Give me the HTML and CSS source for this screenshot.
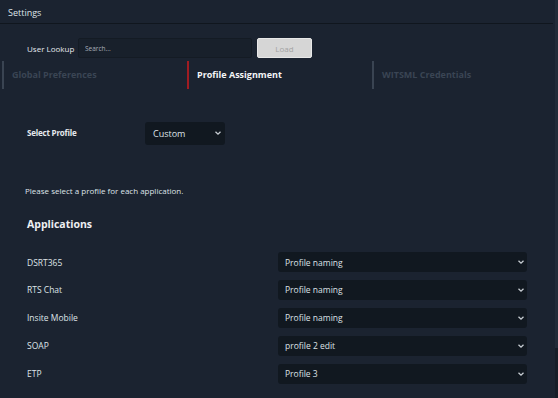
FILE: index.html
```html
<!DOCTYPE html>
<html lang="en">
<head>
    <meta charset="UTF-8">
    <meta name="viewport" content="width=device-width, initial-scale=1.0">
    <title>Settings</title>
    <link rel="stylesheet" href="styles.css">
</head>
<body>
    <div class="page">
        <div class="container">
            <div class="header">Settings</div>

            <div class="lookup">
                <label for="lookup">User Lookup</label>
                <input type="text" id="lookup" placeholder="Search...">
                <button class="btn-load">Load</button>
            </div>

            <div class="tabs">
                <div class="tab">Global Preferences</div>
                <div class="tab active">Profile Assignment</div>
                <div class="tab">WITSML Credentials</div>
            </div>

            <div class="profile-row">
                <label>Select Profile</label>
                <div class="select small">
                    <span>Custom</span>
                    <svg viewBox="0 0 8 8"><path d="M1.5 2.8 L4 5.2 L6.5 2.8" /></svg>
                </div>
            </div>

            <p class="note">Please select a profile for each application.</p>

            <h2 class="apps-title">Applications</h2>

            <div class="apps">
                <div class="app-row">
                    <span class="app-name">DSRT365</span>
                    <div class="select wide"><span>Profile naming</span><svg viewBox="0 0 8 8"><path d="M1.5 2.8 L4 5.2 L6.5 2.8" /></svg></div>
                </div>
                <div class="app-row">
                    <span class="app-name">RTS Chat</span>
                    <div class="select wide"><span>Profile naming</span><svg viewBox="0 0 8 8"><path d="M1.5 2.8 L4 5.2 L6.5 2.8" /></svg></div>
                </div>
                <div class="app-row">
                    <span class="app-name">Insite Mobile</span>
                    <div class="select wide"><span>Profile naming</span><svg viewBox="0 0 8 8"><path d="M1.5 2.8 L4 5.2 L6.5 2.8" /></svg></div>
                </div>
                <div class="app-row">
                    <span class="app-name">SOAP</span>
                    <div class="select wide"><span>profile 2 edit</span><svg viewBox="0 0 8 8"><path d="M1.5 2.8 L4 5.2 L6.5 2.8" /></svg></div>
                </div>
                <div class="app-row">
                    <span class="app-name">ETP</span>
                    <div class="select wide"><span>Profile 3</span><svg viewBox="0 0 8 8"><path d="M1.5 2.8 L4 5.2 L6.5 2.8" /></svg></div>
                </div>
            </div>
        </div>
        <div class="scrollbar"><div class="thumb"></div></div>
    </div>
</body>
</html>
```

FILE: styles.css
```css
body {
    font-family: "Open Sans", "Liberation Sans", sans-serif;
    margin: 0;
    padding: 0;
    background-color: #1b2330;
    color: #e6e9ed;
    overflow: hidden;
}
.page {
    display: flex;
    width: 558px;
    height: 398px;
}
.container {
    width: 555px;
}
.header {
    height: 23px;
    width: 545px;
    padding-left: 8px;
    font-size: 9px;
    line-height: 25px;
    border-bottom: 1px solid #10161e;
    color: #dfe3e8;
}
.lookup {
    display: flex;
    align-items: center;
    margin-top: 14px;
    padding-left: 27px;
    height: 20px;
}
.lookup label {
    font-size: 8px;
    width: 51px;
}
.lookup input {
    width: 174px;
    height: 20px;
    box-sizing: border-box;
    background-color: #18202b;
    border: 1px solid #141b24;
    border-radius: 2px;
    padding: 0 6px;
    font-family: inherit;
    font-size: 6.5px;
    color: #c0c6ce;
}
.lookup input::placeholder {
    color: #a7afb9;
}
.btn-load {
    margin-left: 5px;
    width: 55px;
    height: 20px;
    background-color: #d6d6d6;
    border: 1px solid #e8e8e8;
    border-radius: 2px;
    color: #a3a3a3;
    font-family: inherit;
    font-size: 8px;
    padding: 0;
}
.tabs {
    display: grid;
    grid-template-columns: 185px 185px 185px;
    margin-top: 3px;
    padding-left: 2px;
}
.tab {
    height: 28px;
    line-height: 28px;
    border-left: 2px solid #3a4452;
    padding-left: 8px;
    font-size: 9px;
    font-weight: 700;
    color: #3a4554;
}
.tab.active {
    border-left-color: #a01c22;
    color: #f4f5f7;
}
.profile-row {
    display: flex;
    align-items: center;
    margin-top: 33px;
    padding-left: 27px;
}
.profile-row label {
    width: 118px;
    font-size: 8px;
    font-weight: 700;
    letter-spacing: -0.2px;
    position: relative;
    top: -1px;
}
.select {
    position: relative;
    display: flex;
    align-items: center;
    box-sizing: border-box;
    background-color: #111820;
    border-radius: 3px;
    color: #dde1e6;
}
.select svg {
    position: absolute;
    width: 8px;
    height: 8px;
    fill: none;
    stroke: #c9ced4;
    stroke-width: 1.3;
}
.select.small {
    width: 80px;
    height: 23px;
    padding-left: 8px;
    font-size: 9px;
}
.select.small svg {
    right: 3px;
    top: 7px;
}
.note {
    margin: 40px 0 0 25px;
    font-size: 8px;
    color: #dfe3e8;
}
.apps-title {
    margin: 21px 0 0 27px;
    font-size: 10.5px;
    font-weight: 700;
    color: #eef0f3;
}
.apps {
    display: flex;
    flex-direction: column;
    gap: 7.9px;
    margin-top: 21px;
}
.app-row {
    display: flex;
    align-items: center;
    height: 20px;
    padding-left: 27px;
}
.app-name {
    width: 251px;
    font-size: 8.5px;
    color: #dfe3e8;
}
.select.wide {
    width: 249px;
    height: 20px;
    padding-left: 7px;
    font-size: 8.5px;
}
.select.wide svg {
    right: 2px;
    top: 6px;
}
.scrollbar {
    width: 3px;
    height: 398px;
    background-color: #161d27;
}
.thumb {
    height: 348px;
    background-color: #222b38;
}
```
